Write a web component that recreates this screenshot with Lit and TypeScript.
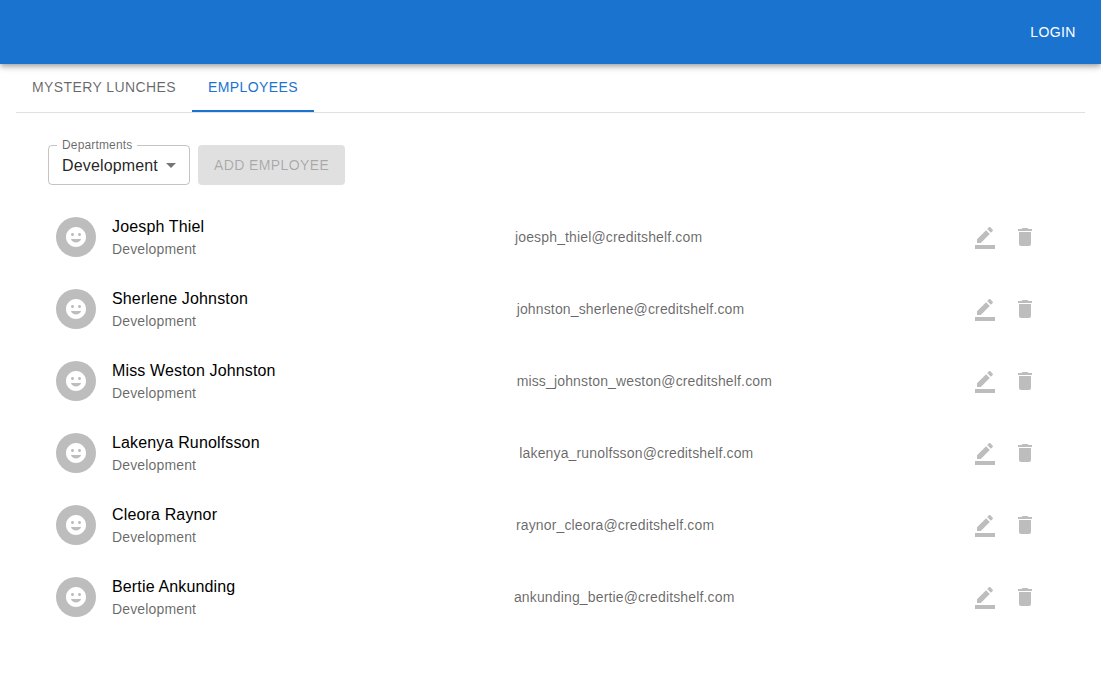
import { LitElement, html, css } from "lit";
import { customElement, state } from "lit/decorators.js";

interface Employee {
  name: string;
  department: string;
  email: string;
}

const EMPLOYEES: Employee[] = [
  { name: "Joesph Thiel", department: "Development", email: "joesph_thiel@creditshelf.com" },
  { name: "Sherlene Johnston", department: "Development", email: "johnston_sherlene@creditshelf.com" },
  { name: "Miss Weston Johnston", department: "Development", email: "miss_johnston_weston@creditshelf.com" },
  { name: "Lakenya Runolfsson", department: "Development", email: "lakenya_runolfsson@creditshelf.com" },
  { name: "Cleora Raynor", department: "Development", email: "raynor_cleora@creditshelf.com" },
  { name: "Bertie Ankunding", department: "Development", email: "ankunding_bertie@creditshelf.com" },
];

const faceIcon = html`<svg class="icon" viewBox="0 0 24 24" aria-hidden="true"><path d="M11.99 2C6.47 2 2 6.48 2 12s4.47 10 9.99 10C17.52 22 22 17.52 22 12S17.52 2 11.99 2zM8.5 8c.83 0 1.5.67 1.5 1.5S9.33 11 8.5 11 7 10.33 7 9.5 7.67 8 8.5 8zM12 17.5c-2.33 0-4.31-1.46-5.11-3.5h10.22c-.8 2.04-2.78 3.5-5.11 3.5zm3.5-6.5c-.83 0-1.5-.67-1.5-1.5S14.67 8 15.5 8s1.5.67 1.5 1.5-.67 1.5-1.5 1.5z"></path></svg>`;

const editIcon = html`<svg class="icon" viewBox="0 0 24 24" aria-hidden="true"><path d="M22 24H2v-4h20v4zM13.06 5.19l3.75 3.75L7.75 18H4v-3.75l9.06-9.06zm4.82 2.68-3.75-3.75 1.83-1.83c.39-.39 1.02-.39 1.41 0l2.34 2.34c.39.39.39 1.02 0 1.41l-1.83 1.83z"></path></svg>`;

const deleteIcon = html`<svg class="icon" viewBox="0 0 24 24" aria-hidden="true"><path d="M6 19c0 1.1.9 2 2 2h8c1.1 0 2-.9 2-2V7H6v12zM19 4h-3.5l-1-1h-5l-1 1H5v2h14V4z"></path></svg>`;

@customElement("app-root")
export class AppRoot extends LitElement {
  @state() private tab = "Employees";

  static styles = css`
    :host {
      --primary: #1b73d0;
      display: block;
      font-family: "Liberation Sans", Arial, sans-serif;
      font-size: 16px;
      line-height: 24px;
      letter-spacing: 0.00938em;
      color: rgba(0, 0, 0, 0.87);
      background: #fff;
    }
    * {
      box-sizing: border-box;
    }
    button,
    select {
      font: inherit;
      margin: 0;
      border: 0;
      background: none;
      cursor: pointer;
    }
    .icon {
      display: block;
      width: 24px;
      height: 24px;
      fill: currentColor;
    }
    .bar {
      display: flex;
      align-items: center;
      justify-content: flex-end;
      min-height: 64px;
      padding: 0 16px;
      background: var(--primary);
      box-shadow: 0 2px 4px -1px rgba(0, 0, 0, 0.2), 0 4px 5px 0 rgba(0, 0, 0, 0.14),
        0 1px 10px 0 rgba(0, 0, 0, 0.12);
    }
    .bar .text-button,
    .tab,
    .add {
      font-size: 14px;
      letter-spacing: 0.02857em;
      text-transform: uppercase;
    }
    .bar .text-button {
      min-width: 64px;
      padding: 6px 8px;
      color: #fff;
      border-radius: 4px;
    }
    .tabs {
      display: flex;
      margin: 0 16px;
      border-bottom: 1px solid rgba(0, 0, 0, 0.12);
    }
    .tab {
      height: 48px;
      padding: 0 16px;
      line-height: 18px;
      color: rgba(0, 0, 0, 0.6);
      border-top: 0;
      border-bottom: 2px solid transparent;
    }
    .tab[aria-selected="true"] {
      color: var(--primary);
      border-bottom-color: var(--primary);
    }
    .panel {
      padding: 24px 40px;
    }
    .toolbar {
      display: flex;
      gap: 8px;
      padding: 8px;
    }
    .field {
      position: relative;
      display: flex;
      border: 1px solid rgba(0, 0, 0, 0.23);
      border-radius: 4px;
    }
    .field label {
      position: absolute;
      top: -7px;
      left: 8px;
      padding: 0 5px;
      font-size: 12px;
      line-height: 12px;
      white-space: nowrap;
      color: rgba(0, 0, 0, 0.6);
      background: #fff;
    }
    .field select {
      appearance: none;
      height: 38px;
      padding: 2px 31px 0 13px;
      letter-spacing: inherit;
      color: rgba(0, 0, 0, 0.87);
    }
    .field .icon {
      position: absolute;
      top: 7px;
      right: 6px;
      color: rgba(0, 0, 0, 0.54);
      pointer-events: none;
    }
    .add {
      padding: 0 16px;
      border-radius: 4px;
      background: rgba(0, 0, 0, 0.12);
      color: rgba(0, 0, 0, 0.26);
      cursor: default;
    }
    .list {
      margin: 0;
      padding: 8px 0;
      list-style: none;
    }
    .row {
      display: flex;
      align-items: center;
      padding: 8px 16px;
    }
    .avatar {
      display: flex;
      flex: none;
      align-items: center;
      justify-content: center;
      width: 40px;
      height: 40px;
      margin-right: 16px;
      border-radius: 50%;
      color: #fff;
      background: #bdbdbd;
    }
    .person,
    .email {
      flex: 1 1 auto;
      min-width: 0;
      margin: 6px 0;
    }
    .name {
      color: #000;
    }
    .department,
    .email {
      font-size: 14px;
      line-height: 20px;
      letter-spacing: 0.01071em;
      color: rgba(0, 0, 0, 0.6);
    }
    .actions {
      display: flex;
      flex: none;
      margin-left: -48px;
    }
    .icon-button {
      padding: 8px;
      border-radius: 50%;
      color: rgba(0, 0, 0, 0.26);
    }
  `;

  render() {
    return html`
      <header class="bar"><button class="text-button" type="button">Login</button></header>
      <main>
        <div class="tabs" role="tablist">
          ${["Mystery Lunches", "Employees"].map(
            (name) => html`<button
              class="tab"
              type="button"
              role="tab"
              aria-selected=${this.tab === name ? "true" : "false"}
              @click=${() => (this.tab = name)}
            >${name}</button>`
          )}
        </div>
        <section class="panel" role="tabpanel">
          <div class="toolbar">
            <div class="field">
              <select id="departments">
                <option>Development</option>
              </select>
              <label for="departments">Departments</label>
              <svg class="icon" viewBox="0 0 24 24" aria-hidden="true"><path d="M7 10l5 5 5-5z"></path></svg>
            </div>
            <button class="add" type="button" disabled>Add employee</button>
          </div>
          <ul class="list">
            ${EMPLOYEES.map(
              (e) => html`<li class="row">
                <div class="avatar">${faceIcon}</div>
                <div class="person">
                  <div class="name">${e.name}</div>
                  <div class="department">${e.department}</div>
                </div>
                <div class="email">${e.email}</div>
                <div class="actions">
                  <button class="icon-button" type="button" disabled aria-label="Edit ${e.name}">${editIcon}</button>
                  <button class="icon-button" type="button" disabled aria-label="Delete ${e.name}">${deleteIcon}</button>
                </div>
              </li>`
            )}
          </ul>
        </section>
      </main>
    `;
  }
}
